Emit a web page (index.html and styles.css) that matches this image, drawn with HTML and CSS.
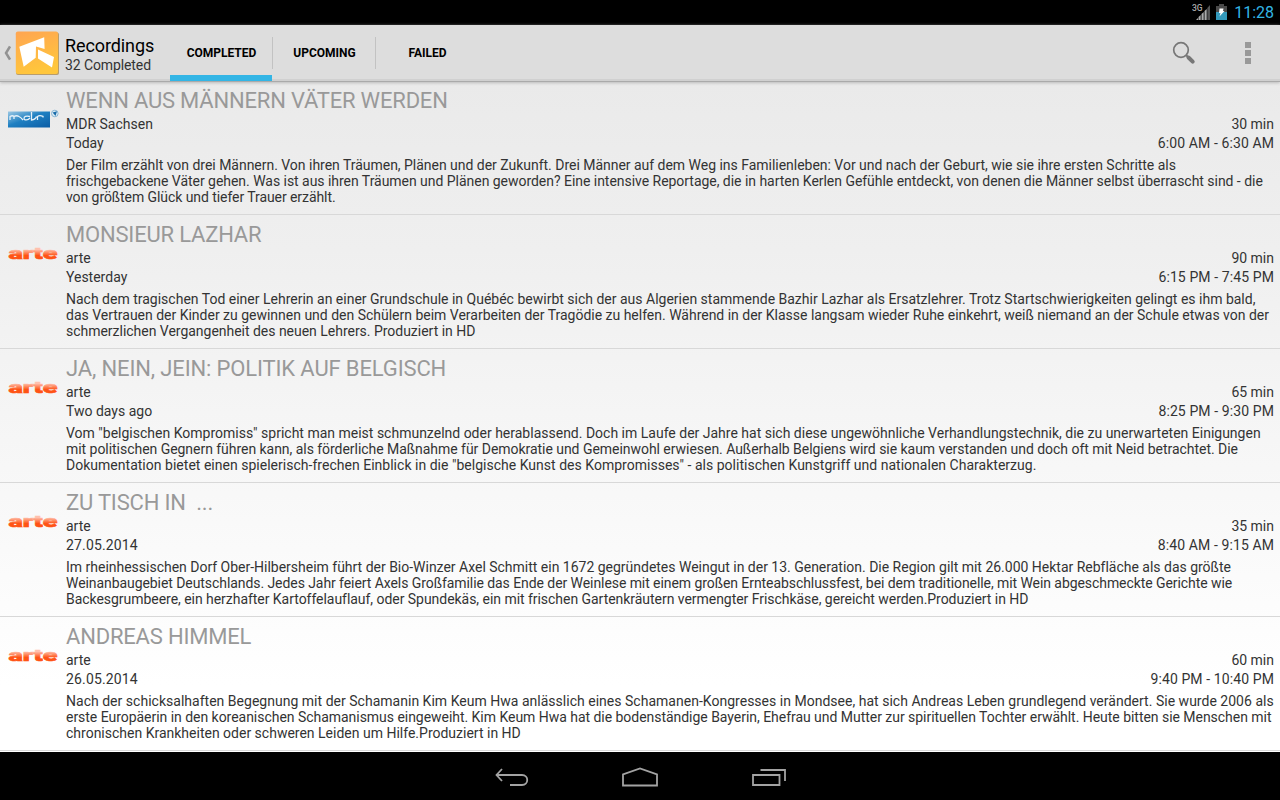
FILE: index.html
```html
<!DOCTYPE html>
<html lang="de">
<head>
<meta charset="utf-8">
<title>Recordings</title>
<link rel="stylesheet" href="styles.css">
</head>
<body>
<div class="screen">
  <div class="status">
    <svg class="signal" width="20" height="18" viewBox="0 0 20 18">
      <text class="threeg" x="0" y="8" textLength="10.500">3G</text>
      <path d="M4 17h2v-2zM6.500 17h2.200v-5l-2.200 2zM9.500 17h2.200V9l-2.200 2zM12.500 17h2.200V6l-2.200 2z" fill="#aaa"/><path d="M15.300 17h2.700V2l-2.700 3z" fill="#555"/>
    </svg>
    <svg class="battery" width="11" height="16" viewBox="0 0 11 16">
      <path d="M3 0h5v2h3v14H0V2h3z" fill="#4a4a4a"/><path d="M0 8h11v8H0z" fill="#3399bb"/><path d="M3.500 4.500h4L7 7h1.500L3.500 12.500 4.500 9H3z" fill="#fff"/>
    </svg>
    <span class="clock">11:28</span>
  </div>
  <header class="bar">
    <svg class="up" width="8" height="16" viewBox="0 0 8 16"><path d="M7 1.500L3 8l4 6.500" fill="none" stroke="#929292" stroke-width="2.500"/></svg>
    <svg class="app" width="45" height="45" viewBox="0 0 45 45">
      <defs><linearGradient id="app" x1="0" y1="0" x2="0.300" y2="1"><stop offset="0" stop-color="#ffa552"/><stop offset="1" stop-color="#ffc63c"/></linearGradient></defs>
      <rect x="1" y="1.500" width="43" height="42.500" rx="2" fill="#b99d6c"/><rect x="0.800" y="0.500" width="42.200" height="42.500" rx="2" fill="url(#app)"/>
      <path d="M4.300 15.700L29.200 6.300l.4 11.700-8.600-2.500-.3 11.200L8.700 35.700zM23 18.500l16 7.500-2 10.500L23 27.500z" fill="#fff"/>
    </svg>
    <div class="titles"><div class="title">Recordings</div><div class="subtitle">32 Completed</div></div>
    <nav class="tabs"><span class="tab active">COMPLETED</span><span class="tab">UPCOMING</span><span class="tab">FAILED</span></nav>
    <svg class="search" width="24" height="24" viewBox="0 0 24 24"><circle cx="9" cy="9" r="7.300" fill="none" stroke="#777" stroke-width="1.700"/><path d="M14 14l2.500 2.500" stroke="#777" stroke-width="2"/><path d="M16.500 16.500l4.200 4.200" stroke="#777" stroke-width="4" stroke-linecap="round"/></svg>
    <div class="more"><i></i><i></i><i></i></div>
  </header>
  <main class="list">
    <article class="item">
      <svg class="logo" width="54" height="22" viewBox="0 0 54 22">
        <defs><linearGradient id="mdr" x1="0" y1="0" x2="1" y2="1"><stop offset="0" stop-color="#9cc8e4"/><stop offset="0.450" stop-color="#1f80c2"/><stop offset="1" stop-color="#0c5da5"/></linearGradient></defs>
        <rect x="2" y="4.500" width="42" height="16" fill="url(#mdr)"/>
        <path d="M4 13V9.500q2.500-1.500 4 0V12M8 9.500q2.500-1.500 5 0 2 1 4 3.500M24 9.500c-4-1-6 0-6 2s4 2 6-.5M25.500 5v8q4-.5 5-3.500M31.500 13V9.500q2-1.800 5.500-.2v1.200" fill="none" stroke="#e6f1f9" stroke-width="1.300"/>
        <circle cx="48.800" cy="6.500" r="3.300" fill="#dcebf4" stroke="#7fb0d0" stroke-width=".9"/><path d="M46.600 5.500l4.400-1.200-1.500 4.700z" fill="#186ba8"/>
      </svg>
      <div class="body">
        <h2>WENN AUS MÄNNERN VÄTER WERDEN</h2>
        <div class="row"><span>MDR Sachsen</span><span>30 min</span></div>
        <div class="row"><span>Today</span><span class="time">6:00 AM - 6:30 AM</span></div>
        <p><span class="t2">Der Film erzählt von drei Männern. Von ihren Träumen, Plänen und der Zukunft. Drei Männer auf dem Weg ins Familienleben: Vor und nach der Geburt, wie sie ihre ersten Schritte als</span><br><span class="t3">frischgebackene Väter gehen. Was ist aus ihren Träumen und Plänen geworden? Eine intensive Reportage, die in harten Kerlen Gefühle entdeckt, von denen die Männer selbst überrascht sind - die</span><br><span class="t7">von größtem Glück und tiefer Trauer erzählt.</span></p>
      </div>
    </article>
    <article class="item">
      <svg class="logo" width="54" height="22" viewBox="0 0 54 22"><defs><linearGradient id="arte" x1="0" y1="0" x2="0" y2="1"><stop offset="0.350" stop-color="#ffc0ad"/><stop offset="0.650" stop-color="#ff5316"/></linearGradient></defs><text class="arte" x="2.500" y="17.500" textLength="49" lengthAdjust="spacingAndGlyphs">arte</text></svg>
      <div class="body">
        <h2>MONSIEUR LAZHAR</h2>
        <div class="row"><span>arte</span><span>90 min</span></div>
        <div class="row"><span>Yesterday</span><span class="time">6:15 PM - 7:45 PM</span></div>
        <p><span>Nach dem tragischen Tod einer Lehrerin an einer Grundschule in Québéc bewirbt sich der aus Algerien stammende Bazhir Lazhar als Ersatzlehrer. Trotz Startschwierigkeiten gelingt es ihm bald,</span><br><span class="t1">das Vertrauen der Kinder zu gewinnen und den Schülern beim Verarbeiten der Tragödie zu helfen. Während in der Klasse langsam wieder Ruhe einkehrt, weiß niemand an der Schule etwas von der</span><br><span class="t2">schmerzlichen Vergangenheit des neuen Lehrers. Produziert in HD</span></p>
      </div>
    </article>
    <article class="item">
      <svg class="logo" width="54" height="22" viewBox="0 0 54 22"><text class="arte" x="2.500" y="17.500" textLength="49" lengthAdjust="spacingAndGlyphs">arte</text></svg>
      <div class="body">
        <h2 class="wide">JA, NEIN, JEIN: POLITIK AUF BELGISCH</h2>
        <div class="row"><span>arte</span><span>65 min</span></div>
        <div class="row"><span>Two days ago</span><span class="time">8:25 PM - 9:30 PM</span></div>
        <p><span>Vom "belgischen Kompromiss" spricht man meist schmunzelnd oder herablassend. Doch im Laufe der Jahre hat sich diese ungewöhnliche Verhandlungstechnik, die zu unerwarteten Einigungen</span><br><span class="t4">mit politischen Gegnern führen kann, als förderliche Maßnahme für Demokratie und Gemeinwohl erwiesen. Außerhalb Belgiens wird sie kaum verstanden und doch oft mit Neid betrachtet. Die</span><br><span class="w2">Dokumentation bietet einen spielerisch-frechen Einblick in die "belgische Kunst des Kompromisses" - als politischen Kunstgriff und nationalen Charakterzug.</span></p>
      </div>
    </article>
    <article class="item">
      <svg class="logo" width="54" height="22" viewBox="0 0 54 22"><text class="arte" x="2.500" y="17.500" textLength="49" lengthAdjust="spacingAndGlyphs">arte</text></svg>
      <div class="body">
        <h2>ZU TISCH IN&nbsp; ...</h2>
        <div class="row"><span>arte</span><span>35 min</span></div>
        <div class="row"><span class="date">27.05.2014</span><span class="time">8:40 AM - 9:15 AM</span></div>
        <p><span class="t1">Im rheinhessischen Dorf Ober-Hilbersheim führt der Bio-Winzer Axel Schmitt ein 1672 gegründetes Weingut in der 13. Generation. Die Region gilt mit 26.000 Hektar Rebfläche als das größte</span><br><span class="t7">Weinanbaugebiet Deutschlands. Jedes Jahr feiert Axels Großfamilie das Ende der Weinlese mit einem großen Ernteabschlussfest, bei dem traditionelle, mit Wein abgeschmeckte Gerichte wie</span><br><span class="t4">Backesgrumbeere, ein herzhafter Kartoffelauflauf, oder Spundekäs, ein mit frischen Gartenkräutern vermengter Frischkäse, gereicht werden.Produziert in HD</span></p>
      </div>
    </article>
    <article class="item">
      <svg class="logo" width="54" height="22" viewBox="0 0 54 22"><text class="arte" x="2.500" y="17.500" textLength="49" lengthAdjust="spacingAndGlyphs">arte</text></svg>
      <div class="body">
        <h2>ANDREAS HIMMEL</h2>
        <div class="row"><span>arte</span><span>60 min</span></div>
        <div class="row"><span class="date">26.05.2014</span><span class="time">9:40 PM - 10:40 PM</span></div>
        <p><span class="w2">Nach der schicksalhaften Begegnung mit der Schamanin Kim Keum Hwa anlässlich eines Schamanen-Kongresses in Mondsee, hat sich Andreas Leben grundlegend verändert. Sie wurde 2006 als</span><br><span class="t3">erste Europäerin in den koreanischen Schamanismus eingeweiht. Kim Keum Hwa hat die bodenständige Bayerin, Ehefrau und Mutter zur spirituellen Tochter erwählt. Heute bitten sie Menschen mit</span><br><span>chronischen Krankheiten oder schweren Leiden um Hilfe.Produziert in HD</span></p>
      </div>
    </article>
  </main>
  <footer class="nav">
    <svg width="34" height="20" viewBox="0 0 34 20"><path d="M7 2L1.500 8 7 14M2 8h25c7 0 7 10 0 10H15" fill="none" stroke="#a3a3a3" stroke-width="1.800"/></svg>
    <svg width="36" height="20" viewBox="0 0 36 20"><path d="M1 18.500V7.500L18 1.500l17 6v11z" fill="none" stroke="#a3a3a3" stroke-width="1.800"/></svg>
    <svg class="recent" width="34" height="20" viewBox="0 0 34 20"><path d="M1 8h26.500v10H1zM8.500 3H33v11" fill="none" stroke="#a3a3a3" stroke-width="1.800"/></svg>
  </footer>
</div>
</body>
</html>
```

FILE: styles.css
```css
* { box-sizing: border-box; }
body { margin: 0; font-family: Roboto, sans-serif; background: #000; overflow: hidden; }
svg { display: block; flex: none; }
.screen { width: 1280px; height: 800px; display: flex; flex-direction: column; }
.status { height: 25px; background: #000; display: flex; justify-content: flex-end; padding-right: 6px; }
.signal { margin: 3px 4px 0 0; }
.threeg { font: 500 8.5px Roboto, sans-serif; fill: #aaa; }
.battery { margin: 4px 7px 0 0; }
.clock { font-size: 16px; line-height: 25px; color: #33b5e5; }
.bar { height: 57px; background: #ddd; display: flex; border-bottom: 1px solid #aaa; box-shadow: inset 0 -2px #d0d0d0, 0 1px 3px #bbb; position: relative; }
.up { margin: 20px 0 0 3px; }
.app { margin: 6px 0 0 4px; }
.titles { width: 110px; padding: 10px 0 0 5px; white-space: nowrap; }
.title { font-size: 18px; line-height: 22px; color: #000; letter-spacing: -0.1px; }
.subtitle { font-size: 14px; line-height: 16px; color: #333; letter-spacing: -0.1px; }
.tabs { display: flex; height: 56px; }
.tab { width: 103px; font-size: 12px; font-weight: 700; line-height: 56px; text-align: center; color: #000; background: linear-gradient(#c2c2c2, #c2c2c2) 100% 12px / 1px 32px no-repeat; }
.tab:last-child { background: none; }
.tab.active { background: linear-gradient(#c2c2c2, #c2c2c2) 100% 12px / 1px 32px no-repeat, linear-gradient(#33b5e5, #33b5e5) 0 100% / 102px 6px no-repeat; }
.search { margin: 16px 0 0 auto; }
.more { width: 6px; margin: 17px 29px 0 49px; display: flex; flex-direction: column; gap: 2px; }
.more i { height: 6px; background: #999; }
.list { height: 670px; overflow: hidden; background: linear-gradient(#eaeaea, #efefef 25%, #fff 90%); }
.item { height: 134px; border-bottom: 1px solid #d8d8d8; display: flex; padding: 6px 6px 0; }
.item:first-child { height: 133px; padding-top: 5px; }
.logo { margin-top: 20px; }
.arte { font: 900 17px Roboto, sans-serif; fill: url(#arte); stroke: url(#arte); stroke-width: 0.6; }
.body { flex: 1; margin-left: 6px; min-width: 0; }
h2 { margin: 0; font-size: 22px; font-weight: 400; line-height: 28px; color: #999; white-space: nowrap; letter-spacing: -0.19px; }
.wide { letter-spacing: -0.14px; }
.row { display: flex; justify-content: space-between; font-size: 14px; line-height: 19px; color: #333; }
.time { letter-spacing: 0.1px; }
.date { letter-spacing: 0.15px; }
p { margin: 4px 0 0; font-size: 14px; line-height: 16px; color: #333; white-space: nowrap; }
/* per-line tracking */
.t1 { letter-spacing: -0.01px; }
.t2 { letter-spacing: -0.022px; }
.t3 { letter-spacing: -0.034px; }
.t4 { letter-spacing: -0.039px; }
.t7 { letter-spacing: -0.07px; }
.w2 { letter-spacing: 0.018px; }
.nav { height: 48px; background: #000; display: flex; justify-content: center; align-items: center; gap: 93px; padding-top: 2px; }
.recent { margin: 0 -1px 0 1px; }
```
